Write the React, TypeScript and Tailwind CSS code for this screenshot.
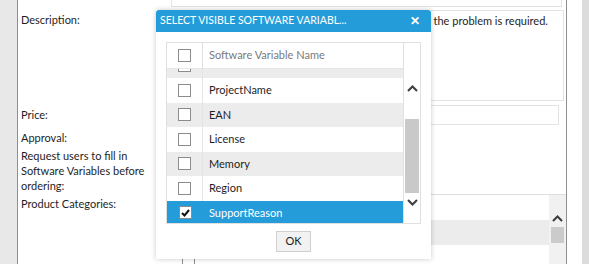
import React from "react";

const font = "font-['Segoe_UI','Lato',sans-serif]";

function Box({ checked = false }: { checked?: boolean }) {
  return (
    <div className="flex h-[13px] w-[13px] items-center justify-center border border-[#8c8c8c] bg-white">
      {checked && (
        <svg width="9" height="8" viewBox="0 0 9 8">
          <path d="M1 4 L3.5 6.5 L8 1" fill="none" stroke="#111" strokeWidth="2" />
        </svg>
      )}
    </div>
  );
}

function Chevron({ up }: { up?: boolean }) {
  return (
    <svg width="11" height="7" viewBox="0 0 11 7">
      <path
        d={up ? "M1 6 L5.5 1.5 L10 6" : "M1 1 L5.5 5.5 L10 1"}
        fill="none"
        stroke="#3c3c3c"
        strokeWidth="2"
      />
    </svg>
  );
}

const rows = [
  { name: "", gray: true },
  { name: "ProjectName", gray: false },
  { name: "EAN", gray: true },
  { name: "License", gray: false },
  { name: "Memory", gray: true },
  { name: "Region", gray: false },
  { name: "SupportReason", gray: false, selected: true },
];

function Dialog() {
  return (
    <div className="absolute left-[156px] top-[10px] flex h-[249px] w-[275px] flex-col bg-white shadow-[0_0_5px_rgba(0,0,0,0.22)]">
      <div className="flex h-[22px] items-center justify-between rounded-t-[3px] bg-[#259cda] pl-[4px] pr-[11px] text-[10.5px] text-white">
        <span>SELECT VISIBLE SOFTWARE VARIABL...</span>
        <span className="text-[12px] font-bold leading-none">✕</span>
      </div>
      <div className="mx-[10px] mt-[10px] flex h-[182px] border border-[#e0e0e0]">
        <div className="flex w-[236px] flex-col">
          <div className="flex h-[26px] shrink-0 items-center border-b border-[#e6e6e6]">
            <div className="flex h-full w-[36px] items-center justify-center border-r border-[#e0e0e0]">
              <Box />
            </div>
            <span className="pl-[6px] text-[#7a7a7a]">Software Variable Name</span>
          </div>
          <div className="h-[155px] overflow-hidden">
            <div className="-mt-[15.5px]">
              {rows.map((r, i) => (
                <div
                  key={i}
                  className={`flex h-[24.5px] items-center ${
                    r.selected ? "bg-[#259cda] text-white" : r.gray ? "bg-[#ececec]" : "bg-white"
                  }`}
                >
                  <div
                    className={`flex h-full w-[36px] items-center justify-center ${
                      r.selected ? "" : "border-r border-[#e4e4e4]"
                    }`}
                  >
                    <Box checked={r.selected} />
                  </div>
                  <span className="pl-[6px]">{r.name}</span>
                </div>
              ))}
            </div>
          </div>
        </div>
        <div className="flex w-[17px] flex-col border-l border-[#e0e0e0]">
          <div className="h-[26px]" />
          <div className="flex flex-1 flex-col items-center">
            <div className="mt-[16px]">
              <Chevron up />
            </div>
            <div className="mt-[27px] h-[74px] w-[14px] bg-[#c9c9c9]" />
            <div className="mt-[6px]">
              <Chevron />
            </div>
          </div>
        </div>
      </div>
      <div className="flex justify-center pt-[7px]">
        <div className="flex h-[21px] w-[35px] items-center justify-center border border-[#cfcfcf] bg-[#f2f2f2]">
          OK
        </div>
      </div>
    </div>
  );
}

export default function App() {
  return (
    <div className={`relative flex h-[264px] w-[589px] overflow-hidden bg-white text-[11px] text-[#1e1e1e] ${font}`}>
      <div className="w-[18px] shrink-0 border-r border-[#8f8f8f] bg-[#e8e8e8]" />
      <div className="flex w-[549px] shrink-0 flex-col border-r border-[#8f8f8f] pl-[3px]">
        <div className="-mt-[19px] flex">
          <div className="w-[150px]" />
          <div className="flex h-[26px] w-[391px] items-center border border-[#e3e3e3] px-[6px]">Level 1 Support</div>
        </div>
        <div className="mt-[3px] flex">
          <div className="w-[150px] pt-[2px]">Description:</div>
          <div className="h-[91px] w-[393px] whitespace-nowrap border border-[#e3e3e3] px-[6px] pt-[2px]">
            Please describe your issue in details. A description of the problem is required.
          </div>
        </div>
        <div className="mt-[4px] flex">
          <div className="flex w-[150px] items-center">Price:</div>
          <div className="h-[20px] w-[388px] border border-[#e3e3e3]" />
        </div>
        <div className="mt-[5px] flex">
          <div className="w-[150px] leading-[15px]">Approval:</div>
        </div>
        <div className="mt-[3px] flex">
          <div className="w-[130px] leading-[15px]">Request users to fill in Software Variables before ordering:</div>
        </div>
        <div className="mt-[1px] flex">
          <div className="w-[150px] pt-[2px] leading-[15px]">Product Categories:</div>
          <div className="flex h-[80px] w-[395px] border-t border-[#dedede]">
            <div className="flex flex-1 flex-col">
              <div className="h-[25px] bg-white" />
              <div className="h-[25px] bg-[#ececec]" />
              <div className="flex h-[25px] items-start pl-[11px] pt-[11px]">
                <Box />
              </div>
            </div>
            <div className="flex w-[17px] flex-col items-center bg-[#f1f1f1]">
              <div className="mt-[20px]">
                <Chevron up />
              </div>
              <div className="mt-[5px] h-[16px] w-[13px] bg-[#cbcbcb]" />
            </div>
          </div>
        </div>
      </div>
      <div className="w-[15px] shrink-0 bg-white" />
      <div className="flex-1 bg-[#dcdcdc]" />
      <Dialog />
    </div>
  );
}
